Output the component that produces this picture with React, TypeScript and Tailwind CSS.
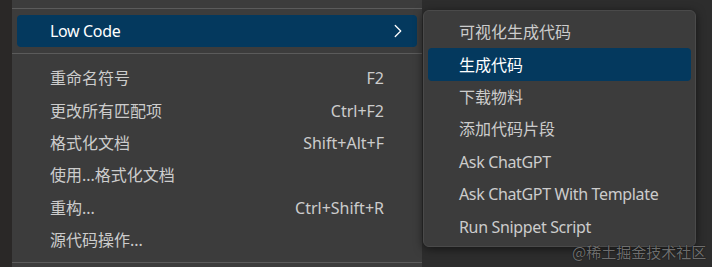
import {ChevronRight} from "lucide-react";

const font = {fontFamily: '"Noto Sans", "Noto Sans CJK SC", sans-serif'}

const mainItems: [string, string][] = [
    ["重命名符号", "F2"],
    ["更改所有匹配项", "Ctrl+F2"],
    ["格式化文档", "Shift+Alt+F"],
    ["使用...格式化文档", ""],
    ["重构...", "Ctrl+Shift+R"],
    ["源代码操作...", ""],
]

const subItems = [
    "可视化生成代码",
    "生成代码",
    "下载物料",
    "添加代码片段",
    "Ask ChatGPT",
    "Ask ChatGPT With Template",
    "Run Snippet Script",
]

const isLatin = (s: string) => /^[\x00-\x7F]+$/.test(s)

const Separator = () => <div className="h-px bg-[#5b5b5b]" />

export default function App() {
    return <div className="relative flex h-[267px] w-[712px] overflow-hidden bg-[#2d2d2d] text-[16px]" style={font}>
        <div className="w-[12px] shrink-0 bg-[#2a2827]" />

        {/* main context menu */}
        <div className="flex w-[410px] shrink-0 flex-col bg-[#3c3c3c] text-[#cccccc]">
            <div className="h-[8px]" />
            <Separator />
            <div className="px-[5px] py-[6px]">
                <div className="flex h-[32px] items-center justify-between rounded-[4px] bg-[#04395e] pl-[33px] pr-[8px] text-white">
                    <span className="tracking-[-0.35px]">Low Code</span>
                    <ChevronRight className="h-[22px] w-[22px]" strokeWidth={1.4} />
                </div>
            </div>
            <Separator />
            <div className="flex flex-col px-[5px] pt-[8px]">
                {mainItems.map(([label, key], i) => (
                    <div key={i} className="flex h-[32.4px] items-center justify-between pl-[33px] pr-[33px]">
                        <span>{label}</span>
                        <span>{key}</span>
                    </div>
                ))}
            </div>
            <div className="mt-[6px]">
                <Separator />
            </div>
        </div>

        {/* submenu */}
        <div className="absolute left-[423px] top-[10px] flex w-[273px] flex-col rounded-[6px] border border-[#4a4a4a] bg-[#3c3c3c] px-[4px] pt-[5px] pb-[3px] text-[#cccccc] shadow-[0_2px_10px_rgba(0,0,0,0.55)]">
            {subItems.map((label, i) => (
                <div
                    key={i}
                    className={i === 1
                        ? "flex h-[32.4px] items-center rounded-[4px] bg-[#04395e] pl-[31px] text-white"
                        : "flex h-[32.4px] items-center pl-[31px]"}
                >
                    <span className={isLatin(label) ? "tracking-[-0.35px]" : ""}>{label}</span>
                </div>
            ))}
        </div>

        <div className="absolute left-[572px] top-[241px] text-[15px] text-[#8a8a8a]/80" style={{fontFamily: '"Noto Sans CJK SC", sans-serif', textShadow: "0 0 1px #000"}}>
            @稀土掘金技术社区
        </div>
    </div>
}
